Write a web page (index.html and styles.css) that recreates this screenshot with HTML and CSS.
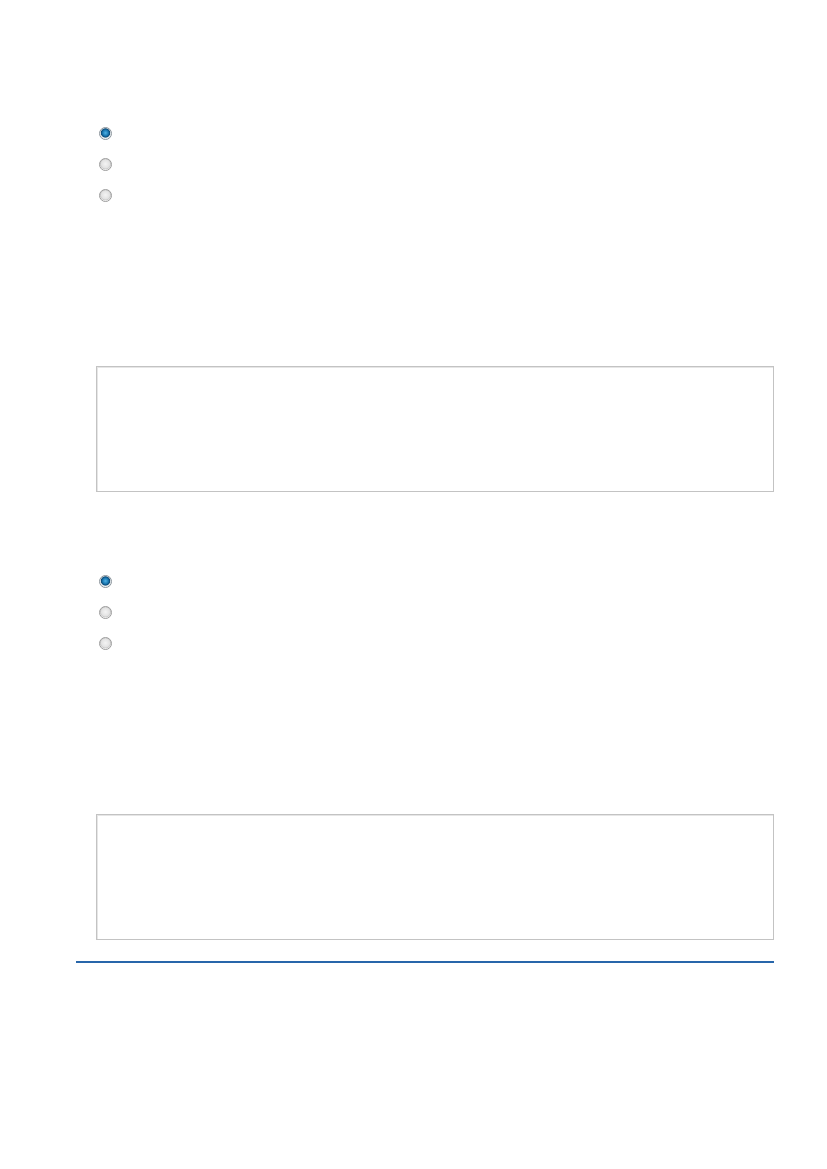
FILE: index.html
```html
<!DOCTYPE html>
<html lang="en">

<head>
    <meta charset="UTF-8">
    <meta name="viewport" content="width=device-width, initial-scale=1.0">
    <title>Document</title>
    <link rel="stylesheet" href="styles.css">
</head>

<body>
    <div class="page">
        <div class="section">
            <div class="options">
                <label class="opt"><input type="radio" name="q1" checked></label>
                <label class="opt"><input type="radio" name="q1"></label>
                <label class="opt"><input type="radio" name="q1"></label>
            </div>
            <div class="answer"></div>
        </div>
        <div class="section">
            <div class="options">
                <label class="opt"><input type="radio" name="q2" checked></label>
                <label class="opt"><input type="radio" name="q2"></label>
                <label class="opt"><input type="radio" name="q2"></label>
            </div>
            <div class="answer"></div>
        </div>
        <div class="rule"></div>
    </div>
</body>

</html>
```

FILE: styles.css
```css
body {
    margin: 0;
    background: #ffffff;
    font-family: "Liberation Sans", Arial, sans-serif;
}

.page {
    width: 698px;
    margin-left: 76px;
    padding-top: 44px;
}

.section {
    padding-top: 74px;
}

.options {
    padding-left: 23px;
    display: flex;
    flex-direction: column;
}

.opt {
    height: 31px;
    display: flex;
    align-items: center;
}

.opt input {
    -webkit-appearance: none;
    appearance: none;
    margin: 0;
    width: 13px;
    height: 13px;
    border-radius: 50%;
    border: 1px solid #9c9c9c;
    box-sizing: border-box;
    background: radial-gradient(circle at 50% 45%, #f4f4f4 0%, #e2e2e2 50%, #c9c9c9 62%, #ffffff 72%, #e6e6e6 100%);
}

.opt input:checked {
    border-color: #8c959c;
    background: radial-gradient(circle at 50% 45%, #4fb2e6 0%, #1a78b2 35%, #0b4a78 52%, #cfd8de 60%, #ffffff 72%, #d4d9dc 100%);
}

.answer {
    margin-top: 155px;
    margin-left: 20px;
    height: 126px;
    border: 1px solid #c3c3c3;
    box-shadow: inset 1px 1px 0 #e6e6e6;
    box-sizing: border-box;
}

.rule {
    margin-top: 21px;
    height: 2px;
    background: #2866aa;
}
```
